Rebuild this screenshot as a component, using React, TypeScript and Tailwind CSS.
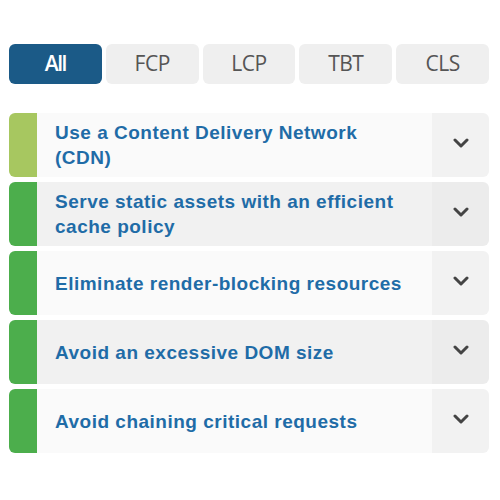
import React from "react";

const tabs = ["All", "FCP", "LCP", "TBT", "CLS"];
const rows = [
  { title: "Use a Content Delivery Network (CDN)", bar: "bg-[#a7c760]", alt: false },
  { title: "Serve static assets with an efficient cache policy", bar: "bg-[#4cae4c]", alt: true },
  { title: "Eliminate render-blocking resources", bar: "bg-[#4cae4c]", alt: false },
  { title: "Avoid an excessive DOM size", bar: "bg-[#4cae4c]", alt: true },
  { title: "Avoid chaining critical requests", bar: "bg-[#4cae4c]", alt: false },
];

function Chevron() {
  return (
    <svg width="16" height="10" viewBox="0 0 16 10" fill="none">
      <path d="M2 2 L8 8 L14 2" stroke="#444" strokeWidth="3" strokeLinecap="round" strokeLinejoin="round" />
    </svg>
  );
}

export default function App() {
  return (
    <div className="w-[500px] h-[500px] bg-white pl-[9px] pr-[11px] pt-[44px]">
      <div className="flex gap-[4px]">
        {tabs.map((t, i) => (
          <div
            key={t}
            className={
              i === 0
                ? "flex-1 h-[40px] rounded-[6px] bg-[#1b5a87] text-white flex items-center justify-center text-[21px] font-semibold"
                : "flex-1 h-[40px] rounded-[6px] bg-[#efefef] text-[#555] flex items-center justify-center text-[21px]"
            }
            style={{ fontFamily: '"Open Sans", sans-serif', letterSpacing: i === 0 ? "-1.5px" : "-0.5px" }}
          >
            {t}
          </div>
        ))}
      </div>
      <div className="mt-[29px] flex flex-col gap-[5px]">
        {rows.map((r) => (
          <div key={r.title} className="flex h-[64px] rounded-[6px] overflow-hidden">
            <div className={`w-[28px] ${r.bar}`} />
            <div
              className={`flex-1 flex items-center pl-[18px] pr-[20px] ${r.alt ? "bg-[#f1f1f1]" : "bg-[#fafafa]"}`}
            >
              <span
                className="text-[#1f6ca7] text-[19px] font-bold leading-[25px] tracking-[0.5px]"
                style={{ fontFamily: '"Liberation Sans", Arial, sans-serif' }}
              >
                {r.title}
              </span>
            </div>
            <div
              className={`w-[57px] flex items-center justify-center pb-[4px] ${r.alt ? "bg-[#ececec]" : "bg-[#f2f2f2]"}`}
            >
              <Chevron />
            </div>
          </div>
        ))}
      </div>
    </div>
  );
}
